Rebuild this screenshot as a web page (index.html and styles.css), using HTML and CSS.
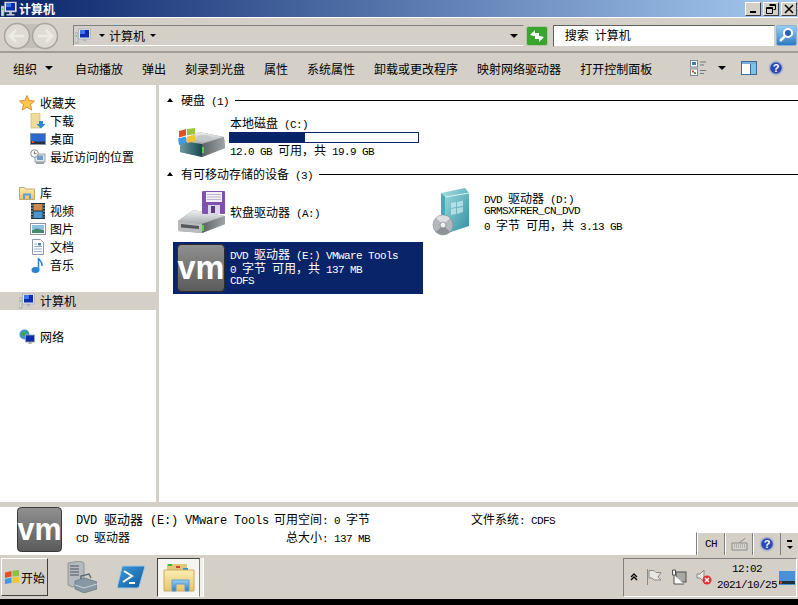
FILE: index.html
```html
<!DOCTYPE html>
<html lang="zh-CN">
<head>
  <meta charset="UTF-8" />
  <title>计算机</title>
  <link rel="stylesheet" href="styles.css">
</head>
<body>
  <svg class="defs" width="0" height="0">
    <defs>
      <linearGradient id="gGray" x1="0" y1="0" x2="0" y2="1"><stop offset="0" stop-color="#f0f2f2"/><stop offset="1" stop-color="#a8adb0"/></linearGradient>
      <linearGradient id="gSide" x1="0" y1="0" x2="1" y2="0"><stop offset="0" stop-color="#5c6264"/><stop offset="1" stop-color="#a0a4a6"/></linearGradient>
      <linearGradient id="gTeal" x1="0" y1="0" x2="1" y2="0"><stop offset="0" stop-color="#6f9aa0"/><stop offset="1" stop-color="#16484f"/></linearGradient>
      <linearGradient id="gVm" x1="0" y1="0" x2="0" y2="1"><stop offset="0" stop-color="#909090"/><stop offset="1" stop-color="#5a5a5a"/></linearGradient>
      <linearGradient id="gCase" x1="0" y1="0" x2="1" y2="1"><stop offset="0" stop-color="#a8e0e4"/><stop offset="1" stop-color="#2f8fa0"/></linearGradient>
      <linearGradient id="gFolder" x1="0" y1="0" x2="0" y2="1"><stop offset="0" stop-color="#fbeeb4"/><stop offset="1" stop-color="#e8c468"/></linearGradient>
      <linearGradient id="gBlue" x1="0" y1="0" x2="0" y2="1"><stop offset="0" stop-color="#9bd0f4"/><stop offset="1" stop-color="#2a78c4"/></linearGradient>
      <linearGradient id="gShell" x1="0" y1="0" x2="1" y2="1"><stop offset="0" stop-color="#3c9ada"/><stop offset="1" stop-color="#0f5c9e"/></linearGradient>
      <symbol id="computer" viewBox="0 0 16 16">
        <rect x="0" y="5" width="3" height="10" fill="#d8dcd8" stroke="#8a8f8a" stroke-width=".6"/>
        <rect x="1" y="7" width="1" height="2" fill="#5fd04f"/>
        <rect x="3.500" y="1" width="12" height="10" fill="#e4e6ea" stroke="#9aa0a8" stroke-width=".6"/>
        <rect x="5" y="2" width="9" height="7.500" fill="#0c2bb0"/>
        <rect x="5" y="2" width="5" height="4" fill="#3c78e8"/>
        <rect x="8" y="11" width="3" height="2" fill="#b0b4b8"/>
        <rect x="5.500" y="13" width="8" height="1.500" fill="#c8ccd0"/>
      </symbol>
      <symbol id="vm" viewBox="0 0 48 48">
        <rect x=".5" y=".5" width="47" height="47" rx="4" fill="url(#gVm)" stroke="#2c2c2c"/>
        <text x="24" y="35" text-anchor="middle" textLength="47" lengthAdjust="spacingAndGlyphs" class="vm-text">vm</text>
      </symbol>
      <symbol id="hdd" viewBox="0 0 48 48">
        <path d="M3 28 L22 19 L47 24 L48 35 L25 44 L3 39 Z" fill="#8b9092"/>
        <path d="M3 28 L22 19 L47 24 L25 31 Z" fill="url(#gGray)"/>
        <path d="M3 28 L25 31 L25 44 L3 39 Z" fill="url(#gTeal)"/>
        <path d="M25 31 L47 24 L48 35 L25 44 Z" fill="url(#gSide)"/>
        <ellipse cx="27" cy="25" rx="8" ry="3" fill="#c4c8ca"/>
        <rect x="25" y="34" width="2" height="6" fill="#58d040"/>
        <path d="M2 18 L9 16 L9 22.500 L2 24.500 Z" fill="#e2502a"/>
        <path d="M10 16 L18 15 L18 21 L10 22.500 Z" fill="#9cc440"/>
        <path d="M1 25.500 L9 23.500 L9 30 L2 32 Z" fill="#3f9be0"/>
        <path d="M10 23.500 L18 22 L18 28 L10 30 Z" fill="#f4c52c"/>
      </symbol>
      <symbol id="floppy" viewBox="0 0 48 48">
        <path d="M1 33 L16 22 L48 28 L48 36 L25 45 L1 43 Z" fill="#8b9092"/>
        <path d="M1 33 L16 22 L48 28 L25 36 Z" fill="url(#gGray)"/>
        <path d="M1 33 L25 36 L25 45 L1 43 Z" fill="#b8bcbe"/>
        <path d="M25 36 L48 28 L48 36 L25 45 Z" fill="url(#gSide)"/>
        <path d="M4 36 L22 38 L22 41 L4 39.500 Z" fill="#55595b"/>
        <rect x="25" y="37" width="2" height="6" fill="#58d040"/>
        <rect x="25" y="3" width="23" height="23" rx="1" fill="#8050b0"/>
        <rect x="29" y="4" width="16" height="10" fill="#f2f0f6"/>
        <path d="M30 6.500h14M30 9h14M30 11.500h14" stroke="#c0b4d4"/>
        <rect x="31" y="17" width="12" height="9" fill="#dcd4e8"/>
        <rect x="34" y="18" width="4" height="7" fill="#5a3a80"/>
      </symbol>
      <symbol id="dvd" viewBox="0 0 48 48">
        <path d="M10 5 L34 0 L38 5 L38 38 L14 46 L10 42 Z" fill="url(#gCase)"/>
        <path d="M10 5 L14 9 L14 46 L10 42 Z" fill="#4aa8b8"/>
        <path d="M14 9 L38 5" stroke="#d8f4f4"/>
        <path d="M20 15 L25 14 L25 19 L20 20 Z M26 14 L32 12.500 L32 18 L26 19 Z M20 21 L25 20 L25 26 L20 27 Z M26 20 L32 19 L32 24 L26 26 Z" fill="#cfeef0" opacity=".7"/>
        <circle cx="12" cy="37" r="10" fill="#b4b8bc" stroke="#85898c" stroke-width=".6"/>
        <path d="M12 37 L5 30 A10 10 0 0 1 19 30 Z" fill="#dcdde0"/>
        <path d="M12 37 L19 44 A10 10 0 0 1 5 44 Z" fill="#8e9296"/>
        <circle cx="12" cy="37" r="3" fill="#eef0f0" stroke="#70767a" stroke-width=".6"/>
      </symbol>
      <symbol id="help" viewBox="0 0 16 16">
        <circle cx="8" cy="8" r="7.500" fill="#b0b8cc"/>
        <circle cx="8" cy="8" r="5.800" fill="#2a48b0"/>
        <text x="8" y="12" text-anchor="middle" class="help-text">?</text>
      </symbol>
    </defs>
  </svg>

  <div class="titlebar">
    <svg class="icon16"><use href="#computer"/></svg>
    <span class="title-text">计算机</span>
    <div class="win-btns">
      <div class="win-btn"><svg width="10" height="10"><rect x="2" y="7" width="6" height="2" fill="#000"/></svg></div>
      <div class="win-btn"><svg width="10" height="10"><path d="M3.500 .5h6v5h-2M.5 3.500h6v6h-6zM3.500 1.500h6M.5 4.500h6" fill="none" stroke="#000"/></svg></div>
      <div class="win-btn win-close"><svg width="10" height="10"><path d="M1 1L9 9M9 1L1 9" stroke="#000" stroke-width="1.500"/></svg></div>
    </div>
  </div>

  <div class="navbar">
    <svg class="nav-arrows" width="56" height="28" viewBox="0 0 56 28">
      <rect x="1" y="2" width="54" height="24" rx="12" fill="#c4c0b8"/>
      <circle cx="14" cy="14" r="12.500" fill="#dedbd4" stroke="#a8a49e" stroke-width="1.500"/>
      <circle cx="42" cy="14" r="12.500" fill="#dedbd4" stroke="#a8a49e" stroke-width="1.500"/>
      <path d="M21 14H8M13 8L7 14L13 20" fill="none" stroke="#ecebe6" stroke-width="2.500"/>
      <path d="M35 14H48M43 8L49 14L43 20" fill="none" stroke="#ecebe6" stroke-width="2.500"/>
    </svg>
    <div class="address">
      <svg class="icon16"><use href="#computer"/></svg>
      <span class="caret addr-caret"></span>
      <span class="addr-text">计算机</span>
      <span class="caret"></span>
      <span class="caret addr-drop"></span>
    </div>
    <svg class="go-btn" width="22" height="20" viewBox="0 0 22 20">
      <rect x=".5" y=".5" width="21" height="19" rx="2" fill="#3aa52c" stroke="#b4c4ac"/>
      <path d="M4 9L9 4V7H13V10H8ZM18 11L13 16V13H9V10H14Z" fill="#fff"/>
    </svg>
    <div class="search"><span>搜索<span class="m"> </span>计算机</span></div>
    <svg class="search-btn" width="21" height="21" viewBox="0 0 21 21">
      <rect x=".5" y=".5" width="20" height="20" rx="2" fill="url(#gBlue)" stroke="#8ab0d8"/>
      <circle cx="12" cy="8" r="4" fill="#2a60b0" stroke="#fff" stroke-width="2"/>
      <path d="M9 11L4 16" stroke="#fff" stroke-width="2.500"/>
    </svg>
  </div>

  <div class="toolbar">
    <span class="tool tool-menu">组织 <span class="caret caret-dark"></span></span>
    <span class="tool">自动播放</span>
    <span class="tool">弹出</span>
    <span class="tool">刻录到光盘</span>
    <span class="tool">属性</span>
    <span class="tool">系统属性</span>
    <span class="tool">卸载或更改程序</span>
    <span class="tool">映射网络驱动器</span>
    <span class="tool">打开控制面板</span>
    <div class="tool-icons">
      <svg width="17" height="16" viewBox="0 0 17 16">
        <rect x=".5" y=".5" width="7" height="6.500" fill="#fff" stroke="#7a8a9a"/>
        <rect x="2" y="2" width="4" height="3" fill="#3a80b0"/>
        <rect x=".5" y="9" width="7" height="6.500" fill="#fff" stroke="#7a8a9a"/>
        <rect x="2" y="10.500" width="2" height="2" fill="#d04030"/><rect x="4" y="12" width="2" height="2" fill="#50a040"/>
        <path d="M10 2h6M10 5h4M10 10.500h6M10 13.500h4" stroke="#6a7a88"/>
      </svg>
      <span class="caret caret-dark view-caret"></span>
      <svg class="pane-icon" width="16" height="14" viewBox="0 0 16 14">
        <rect x=".5" y=".5" width="15" height="13" fill="#fff" stroke="#3a6a9a"/>
        <rect x="1" y="1" width="14" height="2" fill="#7ab0d8"/>
        <rect x="10" y="3" width="5" height="10" fill="#7ac4e0"/>
        <path d="M9.500 3v10" stroke="#3a6a9a"/>
      </svg>
      <svg class="icon16 help-icon"><use href="#help"/></svg>
    </div>
  </div>

  <div class="main">
    <div class="sidebar">
      <div class="nav-item">
        <svg class="icon16" viewBox="0 0 16 16"><path d="M8 .5L10.200 5.500L15.500 6L11.500 9.600L12.700 15L8 12.200L3.300 15L4.500 9.600L.5 6L5.800 5.500Z" fill="#fbc64a" stroke="#e08a30"/></svg>
        收藏夹
      </div>
      <div class="nav-item nav-child">
        <svg class="icon16" viewBox="0 0 16 16"><rect x="1" y="0" width="9" height="15" fill="#f0dc98" stroke="#c8b070" stroke-width=".6"/><path d="M9 8h4v3h2.500l-4.500 4.500L6.500 11H9z" fill="#2a88d8"/></svg>
        下载
      </div>
      <div class="nav-item nav-child">
        <svg class="icon16" viewBox="0 0 16 16"><rect x=".5" y="2.500" width="15" height="11" fill="#2a6ad0" stroke="#8a98a8"/><rect x="1" y="10.500" width="14" height="2.500" fill="#28303c"/><rect x="2" y="10" width="2" height="2" fill="#e05030"/></svg>
        桌面
      </div>
      <div class="nav-item nav-child">
        <svg class="icon16" viewBox="0 0 16 16"><rect x="5" y="5" width="10" height="8" fill="#dfe4e6" stroke="#8a9298" stroke-width=".8"/><rect x="7" y="6.500" width="6" height="4.500" fill="#6f9cc4"/><rect x="6" y="13" width="8" height="2" fill="#9aa0a4"/><circle cx="4.500" cy="4.500" r="3.800" fill="#f4f4f0" stroke="#8a9298"/><path d="M4.500 2.500v2.200h2" fill="none" stroke="#505860" stroke-width=".8"/></svg>
        最近访问的位置
      </div>
      <div class="nav-gap"></div>
      <div class="nav-item">
        <svg class="icon16" viewBox="0 0 16 16"><path d="M.5 2.500h5l1 1.500h9v10.500H.5z" fill="url(#gFolder)" stroke="#c4aa68"/><path d="M4 14V8.500h8V14H10V10.500H6V14z" fill="#5c9fd4"/></svg>
        库
      </div>
      <div class="nav-item nav-child">
        <svg class="icon16" viewBox="0 0 16 16"><rect x="1" y="0" width="14" height="16" fill="#20343c"/><rect x="3.500" y="1" width="9" height="6.500" fill="#d08a50"/><rect x="3.500" y="8.500" width="9" height="6.500" fill="#4a94d0"/><path d="M2 1.500v13M14 1.500v13" stroke="#b8d0d8" stroke-dasharray="1.500 1.500"/></svg>
        视频
      </div>
      <div class="nav-item nav-child">
        <svg class="icon16" viewBox="0 0 16 16"><rect x=".5" y="2.500" width="15" height="11" fill="#fff" stroke="#8a949c"/><rect x="2" y="4" width="12" height="4.500" fill="#8ac0e0"/><path d="M2 12V9L7 7.500L14 9V12Z" fill="#3f8a70"/></svg>
        图片
      </div>
      <div class="nav-item nav-child">
        <svg class="icon16" viewBox="0 0 16 16"><path d="M2.500 .5h8l3 3v12h-11z" fill="#fff" stroke="#8a9aac"/><path d="M4 5h3M4 7.500h8M4 10h8M4 12.500h8" stroke="#9ab0c8"/><rect x="8" y="4" width="3" height="2.500" fill="#4a80b8"/></svg>
        文档
      </div>
      <div class="nav-item nav-child">
        <svg class="icon16" viewBox="0 0 16 16"><ellipse cx="5.500" cy="13" rx="4" ry="3" fill="#2a82d0"/><path d="M8.500 13V1c.5 3 4.500 3.500 3.500 8" fill="none" stroke="#2a82d0" stroke-width="1.500"/></svg>
        音乐
      </div>
      <div class="nav-gap"></div>
      <div class="nav-item nav-selected">
        <svg class="icon16"><use href="#computer"/></svg>
        计算机
      </div>
      <div class="nav-gap"></div>
      <div class="nav-item">
        <svg class="icon16" viewBox="0 0 16 16"><circle cx="5.500" cy="5.500" r="5" fill="#3c94d8"/><path d="M2 3.500c2-1.500 3 0 4 1s-1 3-3 3zM6 1.500c2 0 3 1 3 2.500H6z" fill="#3aa84a"/><rect x="6.500" y="6" width="9" height="7" fill="#0c2bb0" stroke="#a0a8b0" stroke-width=".8"/><rect x="9.500" y="13" width="3" height="2" fill="#a8acb0"/></svg>
        网络
      </div>
    </div>

    <div class="content">
      <div class="group-head">
        <span class="caret-up"></span>
        <span class="group-title">硬盘<span class="m"> (1)</span></span>
        <span class="group-rule"></span>
      </div>
      <div class="tile tile-disk">
        <svg class="icon48"><use href="#hdd"/></svg>
        <div class="tile-text">
          <div>本地磁盘<span class="m"> (C:)</span></div>
          <div class="usage"><div class="usage-fill" style="width: 40%"></div></div>
          <div><span class="m">12.0 GB </span>可用，共<span class="m"> 19.9 GB</span></div>
        </div>
      </div>

      <div class="group-head">
        <span class="caret-up"></span>
        <span class="group-title">有可移动存储的设备<span class="m"> (3)</span></span>
        <span class="group-rule"></span>
      </div>
      <div class="tiles">
        <div class="tile">
          <svg class="icon48"><use href="#floppy"/></svg>
          <div class="tile-text">软盘驱动器<span class="m"> (A:)</span></div>
        </div>
        <div class="tile">
          <svg class="icon48"><use href="#dvd"/></svg>
          <div class="tile-text">
            <div><span class="m">DVD </span>驱动器<span class="m"> (D:)</span></div>
            <div class="m">GRMSXFRER_CN_DVD</div>
            <div><span class="m">0 </span>字节<span class="m"> </span>可用，共<span class="m"> 3.13 GB</span></div>
          </div>
        </div>
        <div class="tile tile-selected">
          <svg class="icon48"><use href="#vm"/></svg>
          <div class="tile-text">
            <div><span class="m">DVD </span>驱动器<span class="m"> (E:) VMware Tools</span></div>
            <div><span class="m">0 </span>字节<span class="m"> </span>可用，共<span class="m"> 137 MB</span></div>
            <div class="m">CDFS</div>
          </div>
        </div>
      </div>
    </div>
  </div>

  <div class="details">
    <svg class="icon-details"><use href="#vm"/></svg>
    <div class="details-col details-name">
      <div class="details-title"><span class="m">DVD </span>驱动器<span class="m"> (E:) VMware Tools</span></div>
      <div><span class="m">CD </span>驱动器</div>
    </div>
    <div class="details-col details-size">
      <div>可用空间<span class="m">: 0 </span>字节</div>
      <div>总大小<span class="m">: 137 MB</span></div>
    </div>
    <div class="details-col details-fs">
      <div>文件系统<span class="m">: CDFS</span></div>
    </div>
    <div class="langbar">
      <span class="lang-cell m">CH</span>
      <span class="lang-cell">
        <svg width="17" height="14" viewBox="0 0 17 14"><path d="M1 6h15v7H1z" fill="#d8d6d0" stroke="#8a8a86"/><path d="M3 8h11M3 10h11" stroke="#8a8a86" stroke-dasharray="1 1"/><path d="M9 6C9 3 13 4 14 1" fill="none" stroke="#8a8a86"/></svg>
      </span>
      <span class="lang-cell"><svg class="icon16"><use href="#help"/></svg></span>
      <span class="lang-more"><i></i><b></b></span>
    </div>
  </div>

  <div class="taskbar">
    <div class="start">
      <svg width="16" height="16" viewBox="0 0 16 16">
        <path d="M1 3.500L7.500 2V7.500L1 9Z" fill="#e2502a"/>
        <path d="M8.500 1.800L15 1V7L8.500 7.500Z" fill="#8cc040"/>
        <path d="M1 10L7.500 8.500V14L1 15Z" fill="#3f9be0"/>
        <path d="M8.500 8.500L15 8V13.500L8.500 14Z" fill="#f4c52c"/>
      </svg>
      <span>开始</span>
    </div>
    <svg class="task-server" width="30" height="32" viewBox="0 0 30 32">
      <path d="M1 2L13 0L17 2V24L5 26L1 24Z" fill="#b4babe" stroke="#70767c" stroke-width=".6"/>
      <path d="M3 5h9M3 8h9M3 11h9M3 14h9" stroke="#4c5258"/>
      <path d="M8 20L18 17L30 21V28L17 32L8 28Z" fill="#8798a4" stroke="#5c6a74" stroke-width=".6"/>
      <path d="M8 24L17 27L30 23" fill="none" stroke="#c8d2d8"/>
      <path d="M14 18V15L22 13L24 17" fill="none" stroke="#5c6a74" stroke-width="1.500"/>
    </svg>
    <svg class="task-shell" width="28" height="24" viewBox="0 0 28 24">
      <path d="M6 1H27Q28 1 27.500 3L22 22Q21.500 23 20 23H1Q0 23 .5 21L5 2Q5.500 1 6 1Z" fill="url(#gShell)" stroke="#9cc8e8"/>
      <path d="M7 6L15 11L6 17M12 18H18" fill="none" stroke="#fff" stroke-width="2"/>
    </svg>
    <div class="task-active">
      <svg width="32" height="30" viewBox="0 0 32 30">
        <rect x="4" y="2" width="20" height="10" fill="#e0c878"/>
        <rect x="5" y="2" width="4" height="2" fill="#40b040"/><rect x="13" y="4" width="4" height="2" fill="#d04030"/><rect x="20" y="6" width="5" height="2" fill="#3090d0"/>
        <path d="M1 8H31V29H1Z" fill="url(#gFolder)" stroke="#c4aa68"/>
        <path d="M9 29V18H26V29H22V22H13V29Z" fill="url(#gBlue)" stroke="#5c9fd4"/>
      </svg>
    </div>
    <div class="task-sliver"></div>
    <div class="tray">
      <svg class="tray-up" width="8" height="8" viewBox="0 0 8 8"><path d="M1 4L4 1L7 4M1 7L4 4L7 7" fill="none" stroke="#000" stroke-width="1.300"/></svg>
      <svg width="16" height="16" viewBox="0 0 16 16"><path d="M1.500 0V16M3 1.500H8L10 3.500H15L12 8L15 11H8L6 9H3Z" fill="#e8e6e0" stroke="#8a8a86"/></svg>
      <svg width="16" height="16" viewBox="0 0 16 16"><rect x="5" y="3" width="10" height="10" fill="#a8a8a4" stroke="#50504e"/><path d="M1.500 1h3v5h-3zM3 6v9h10" fill="#fff" stroke="#50504e"/></svg>
      <svg width="16" height="16" viewBox="0 0 16 16"><path d="M1 5H4L8 1V13L4 9H1Z" fill="#e8e6e0" stroke="#8a8a86"/><circle cx="11" cy="11" r="4.500" fill="#e03030"/><path d="M9 9L13 13M13 9L9 13" stroke="#fff" stroke-width="1.500"/></svg>
      <div class="clock">
        <div class="m">12:02</div>
        <div class="m">2021/10/25</div>
      </div>
      <svg class="show-desktop" width="16" height="14" viewBox="0 0 16 14"><rect width="16" height="14" fill="#4a90d8"/><rect y="10" width="16" height="3" fill="#20303c"/><rect x="1" y="10.500" width="2" height="2" fill="#e05030"/></svg>
    </div>
  </div>
  <div class="screen-edge"></div>
</body>
</html>
```

FILE: styles.css
```css
* { margin: 0; padding: 0; box-sizing: border-box; }
body, html {
  width: 798px;
  height: 605px;
  overflow: hidden;
}
body {
  display: flex;
  flex-direction: column;
  font-family: 'Noto Sans CJK SC', sans-serif;
  font-size: 12px;
  line-height: 13px;
  color: #000;
  background-color: #d4d0c8;
}
svg { display: block; flex-shrink: 0; }
.defs { position: absolute; }
.m {
  font-family: 'Liberation Mono', monospace;
  font-size: 11px;
  letter-spacing: -0.6px;
  line-height: 10px;
}
div.m { line-height: 13px; }
.icon16 { width: 16px; height: 16px; }
.icon48 { width: 48px; height: 48px; }
.vm-text {
  font-family: 'Liberation Sans', sans-serif;
  font-size: 33px;
  font-weight: bold;
  fill: #fff;
}
.help-text {
  font-family: 'Liberation Sans', sans-serif;
  font-size: 11px;
  font-weight: bold;
  fill: #fff;
}

.caret {
  display: inline-block;
  width: 0;
  height: 0;
  border-left: 3px solid transparent;
  border-right: 3px solid transparent;
  border-top: 3px solid #000;
}
.caret-dark {
  border-left-width: 4px;
  border-right-width: 4px;
  border-top-width: 4px;
}
.caret-up {
  width: 0;
  height: 0;
  border-left: 3px solid transparent;
  border-right: 3px solid transparent;
  border-bottom: 4px solid #000;
}

/* title bar */
.titlebar {
  height: 17px;
  display: flex;
  align-items: center;
  padding-left: 1px;
  background: linear-gradient(to right, #0a246a, #a6caf0);
}
.title-text {
  margin: 0 0 1px 2px;
  color: #fff;
  font-weight: bold;
}
.win-btns {
  margin-left: auto;
  display: flex;
  gap: 2px;
  padding-right: 1px;
}
.win-btn {
  width: 16px;
  height: 14px;
  display: flex;
  align-items: center;
  justify-content: center;
  background-color: #d4d0c8;
  border: 1px solid;
  border-color: #fff #404040 #404040 #fff;
}

/* address row */
.navbar {
  height: 36px;
  display: flex;
  align-items: center;
  padding: 2px 1px 0 3px;
  background-color: #d4d0c8;
  border-top: 1px solid #fff;
  border-bottom: 2px solid #a09c96;
}
.address {
  width: 452px;
  height: 21px;
  margin-left: 14px;
  display: flex;
  align-items: center;
  padding-left: 1px;
  border: 1px solid;
  border-color: #808080 #d4d0c8 #fff #808080;
}
.addr-caret { margin: 0 4px 0 8px; }
.addr-text { margin: 0 5px 1px 0; }
.addr-drop { margin-left: auto; margin-right: 5px; border-left-width: 4px; border-right-width: 4px; border-top-width: 4px; }
.go-btn { margin-left: 2px; }
.search {
  width: 223px;
  height: 22px;
  margin-left: 5px;
  display: flex;
  align-items: center;
  padding: 0 0 1px 11px;
  background-color: #fff;
  border: 1px solid;
  border-color: #606060 #d4d0c8 #d4d0c8 #606060;
}
.search-btn { margin-left: 1px; }

/* command row */
.toolbar {
  height: 32px;
  display: flex;
  align-items: center;
  gap: 19px;
  padding: 0 0 2px 13px;
  background-color: #d4d0c8;
}
.tool { white-space: nowrap; }
.tool-menu { display: flex; align-items: center; gap: 8px; margin-right: 3px; }
.tool-icons {
  display: flex;
  align-items: center;
  margin-left: 19px;
}
.view-caret { margin-left: 11px; }
.pane-icon { margin-left: 15px; }
.help-icon { margin-left: 11px; }

/* main area */
.main {
  flex: 1;
  display: flex;
  min-height: 0;
  background-color: #fff;
}
.sidebar {
  width: 159px;
  padding-top: 9px;
  border-right: 3px solid #d4d0c8;
}
.nav-item {
  height: 18px;
  display: flex;
  align-items: center;
  gap: 5px;
  padding: 0 0 1px 19px;
}
.nav-child { padding-left: 30px; gap: 4px; }
.nav-selected { background-color: #d4d0c8; }
.nav-gap { height: 18px; }

.content {
  flex: 1;
  padding: 7px 0 0 8px;
}
.group-head {
  height: 16px;
  display: flex;
  align-items: center;
}
.group-title { margin-left: 8px; }
.group-rule {
  flex: 1;
  height: 1px;
  margin-left: 6px;
  background-color: #000;
}
.tile {
  width: 250px;
  height: 52px;
  display: flex;
  align-items: center;
  gap: 5px;
  padding-left: 4px;
  margin-left: 6px;
}
.tile-text { padding-bottom: 1px; }
.tile-disk { height: 58px; }
.tile-disk .tile-text { padding-bottom: 2px; }
.tile-selected { background-color: #0a246a; color: #fff; }
.tiles {
  display: grid;
  grid-template-columns: 254px 254px;
  row-gap: 4px;
  padding-top: 4px;
}
.usage {
  width: 190px;
  height: 11px;
  margin: 2px 0 0 -1px;
  background-color: #fff;
  border: 1px solid #0a246a;
}
.usage-fill { height: 100%; background-color: #0a246a; }

/* details pane */
.details {
  position: relative;
  height: 53px;
  display: flex;
  padding-left: 17px;
  background-color: #fff;
  border-top: 5px solid #d4d0c8;
}
.icon-details { width: 45px; height: 45px; }
.details-col {
  display: flex;
  flex-direction: column;
  gap: 4px;
  padding-top: 5px;
}
.details-name { width: 194px; margin-left: 14px; }
.details-title { font-size: 13px; white-space: nowrap; }
.details-title .m { font-size: 12px; letter-spacing: -0.2px; }
.details-size { width: 100px; text-align: right; }
.details-fs { margin-left: 101px; }
.langbar {
  position: absolute;
  right: 0;
  bottom: 0;
  height: 23px;
  display: flex;
  align-items: stretch;
  background-color: #d4d0c8;
  border-left: 1px solid #808080;
  border-top: 1px solid #fff;
}
.lang-cell {
  width: 28px;
  display: flex;
  align-items: center;
  justify-content: center;
  border-right: 1px solid #808080;
  border-left: 1px solid #fff;
}
.lang-more {
  width: 17px;
  display: flex;
  flex-direction: column;
  align-items: center;
  justify-content: center;
  gap: 4px;
}
.lang-more i { width: 5px; height: 2px; background-color: #000; }
.lang-more b {
  width: 0;
  height: 0;
  border-left: 3px solid transparent;
  border-right: 3px solid transparent;
  border-top: 3px solid #000;
}

/* taskbar */
.taskbar {
  height: 44px;
  display: flex;
  align-items: center;
  padding: 1px;
  background-color: #d4d0c8;
}
.start {
  width: 47px;
  height: 38px;
  display: flex;
  align-items: center;
  gap: 1px;
  padding-left: 2px;
  border: 1px solid;
  border-color: #fff #404040 #404040 #fff;
}
.task-server { margin-left: 19px; }
.task-shell { margin-left: 20px; }
.task-active {
  width: 43px;
  height: 39px;
  margin-left: 12px;
  display: flex;
  align-items: center;
  justify-content: center;
  background-color: #f6f5f2;
  border: 1px solid;
  border-color: #404040 #808080 #fff #404040;
}
.task-sliver {
  width: 4px;
  height: 39px;
  background-color: #f0efea;
  border-right: 1px solid #fff;
}
.tray {
  width: 174px;
  height: 39px;
  margin-left: auto;
  display: flex;
  align-items: center;
  gap: 9px;
  padding-left: 6px;
  border: 1px solid;
  border-color: #808080 #fff #fff #808080;
}
.tray-up { margin-right: -1px; }
.clock {
  display: flex;
  flex-direction: column;
  align-items: center;
  gap: 3px;
  margin-left: -4px;
  padding-top: 1px;
  line-height: 13px;
}
.show-desktop { margin: 2px 0 0 -7px; }
.screen-edge { height: 6px; background-color: #000; }
```
